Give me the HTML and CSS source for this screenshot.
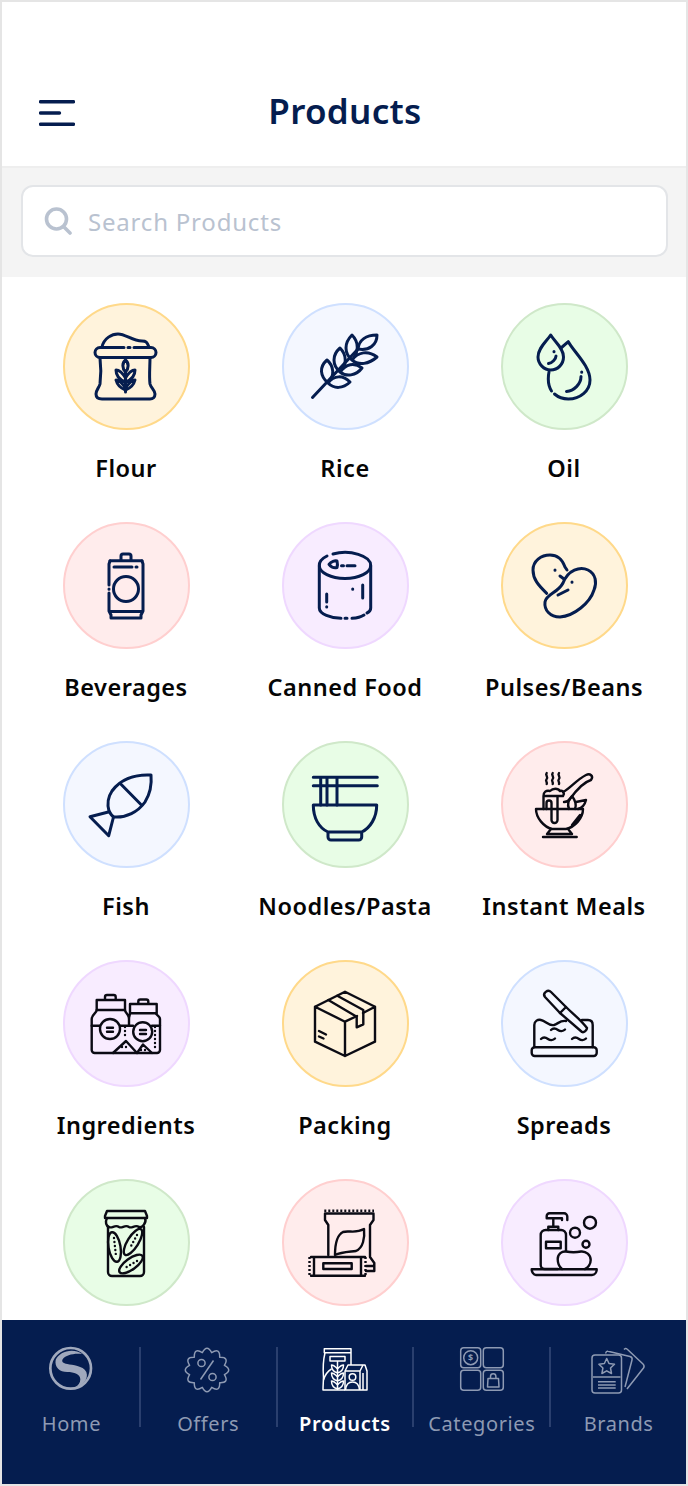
FILE: index.html
```html
<!DOCTYPE html>
<html lang="en">
<head>
  <meta charset="UTF-8">
  <meta name="viewport" content="width=device-width, initial-scale=1.0">
  <title>Products</title>
  <link rel="stylesheet" href="styles.css">
</head>
<body>

<div class="phone">

  <header class="topbar">
    <svg class="menu-icon" width="36" height="26" viewBox="0 0 36 26">
      <path d="M1.5 1.7H34.5M1.5 13H20.5M1.5 24.3H34.5"/>
    </svg>
    <h1>Products</h1>
  </header>

  <div class="search-band">
    <div class="search-box">
      <svg class="search-icon" width="28" height="28" viewBox="0 0 28 28">
        <circle cx="12.5" cy="12" r="10"/>
        <path d="M19.5 19.5L26 26"/>
      </svg>
      <span>Search Products</span>
    </div>
  </div>

  <main class="content">
    <div class="grid">

      <div class="item">
        <div class="circle yellow">
          <svg class="ico" viewBox="0 0 128 128">
            <path d="M62 43.5H38a5 5 0 0 0 0 10H89a5 5 0 0 0 0-10H72M66 43.5h2"/>
            <path d="M40 43C42 34 50 30 56 30C64 30 70 37 80 37C84 37 85 38 87 43"/>
            <path d="M38 54C39 62 39 72 38 80C37 84 34 86 34 90C34 93 36 95 40 95H88C91 95 93 93 93 90C93 86 89 84 88 80C87 72 88 62 88 54"/>
            <path d="M63.5 56C60 59 60 64 63.5 68C67 64 67 59 63.5 56ZM63.5 88V68M63.5 74C60 68 56 66 54 66C54 72 58 76 63.5 78C69 76 73 72 73 66C71 66 67 68 63.5 74ZM63.5 84C60 79 56 76 54 76C55 80 58 84 63.5 86C69 84 72 80 73 76C71 76 67 79 63.5 84Z"/>
          </svg>
        </div>
        <div class="label">Flour</div>
      </div>

      <div class="item">
        <div class="circle blue">
          <svg class="ico" viewBox="0 0 128 128">
            <path d="M31.5 93.5L77 45"/>
            <path d="M47 79C39 72 38 63 46 56C53 62 54 72 47 79ZM47 79C53 71 62 71 69 78C62 85 53 85 47 79Z"/>
            <path d="M59 68C51 61 51 51 59 44C66 51 66 61 59 68ZM59 68C65 60 73 58 81 64C75 72 65 73 59 68Z"/>
            <path d="M71 56C63 49 63 39 71 31C78 38 78 48 71 56ZM71 56C77 48 87 46 96 53C88 60 78 62 71 56Z"/>
            <path d="M77 45C78 36 85 31 96 31C96 41 88 47 77 45Z"/>
          </svg>
        </div>
        <div class="label">Rice</div>
      </div>

      <div class="item">
        <div class="circle green">
          <svg class="ico" viewBox="0 0 128 128">
            <path d="M50.7 31C46 38 38 44 38 53C38 60 44 66 50.7 66C58 66 63.5 60 63.5 53C63.5 44 55 38 50.7 31Z"/>
            <path d="M56 52C56 55 52 59 48.5 59.5M54 47.5v.2"/>
            <path d="M61 44L68.3 37.7C74 48 90 62 90 76C90 87 80 95 68.3 95C63 95 58 93 54.5 90M51.5 87C49 83 48.3 79 48.3 75C48.3 72 48.5 70 49 68"/>
            <path d="M81 72.5C81 80 74 87 66.5 87.5M81.7 68v.2"/>
          </svg>
        </div>
        <div class="label">Oil</div>
      </div>

      <div class="item">
        <div class="circle pink">
          <svg class="ico" viewBox="0 0 128 128">
            <path d="M59 37V33a2 2 0 0 1 2-2h6a2 2 0 0 1 2 2V37M48 37.7H80"/>
            <path d="M47 62V41L48 38M47 66v.2M47 70V88L49 92V95H79V92L81 88V41L80 38M48.5 88.5H79.5M52 44H70M74 44h1"/>
            <circle cx="64" cy="66" r="12.5"/>
          </svg>
        </div>
        <div class="label">Beverages</div>
      </div>

      <div class="item">
        <div class="circle purple">
          <svg class="ico" viewBox="0 0 128 128">
            <path d="M52 31A25.7 13 0 0 1 89.7 42.5A25.7 13 0 0 1 38.3 42.5A25.7 13 0 0 1 46 33"/>
            <path d="M38.3 43V85C38.3 91 50 95.3 60 95.3M64 95.3h2M71 95.3C76 95 80 94 83 92M86 90C88.5 89 89.7 87 89.7 85V43"/>
            <path d="M45.7 71V79M45.7 83.7v.2M81.7 62V75M71.7 66v.2"/>
            <path d="M48 41.3C50 38.5 54 37.5 56 38C56.5 40 56.5 43 56 44.5C53 45 50 44 48 41.3ZM60.5 42.7h2M66 42.7H74"/>
          </svg>
        </div>
        <div class="label">Canned Food</div>
      </div>

      <div class="item">
        <div class="circle yellow">
          <svg class="ico" viewBox="0 0 128 128">
            <path d="M46.7 70.3C38 62 33 56 33 47C33 38 41 32 50 32C58 32 62 36 65 44L67 47"/>
            <path d="M63 60C68 47 80 43 88 47C96 51 97 60 94 67C90 80 74 93 60 94C50 94 44 87 45 79C46 71 58 70 63 60Z"/>
            <path d="M55 47v.2M60 53L64 56M72 59v.2M58 72L68 67"/>
          </svg>
        </div>
        <div class="label">Pulses/Beans</div>
      </div>

      <div class="item">
        <div class="circle blue">
          <svg class="ico" viewBox="0 0 128 128">
            <path d="M89 33C72 32 58 38 50 49C46 55 45 62 47 69C49 73 50 74 52 75C64 76 76 70 83 60C88 52 90 44 89 33Z"/>
            <path d="M59 42.3L78.7 62.3"/>
            <path d="M47.3 69.7L28 74.7L46.7 93.7L51.5 75"/>
          </svg>
        </div>
        <div class="label">Fish</div>
      </div>

      <div class="item">
        <div class="circle green">
          <svg class="ico" viewBox="0 0 128 128">
            <path d="M32.3 35.3H96.3M32.3 43.7H96.3M39.7 35.3V63M46 35.3V63M56 35.3V63"/>
            <path d="M32.3 63H95.7C95.7 76 89 86 80.7 90V95a3 3 0 0 1-3 3H50a3 3 0 0 1-3-3V90C38 86 32.3 76 32.3 63ZM47 90H80.7"/>
          </svg>
        </div>
        <div class="label">Noodles/Pasta</div>
      </div>

      <div class="item">
        <div class="circle pink">
          <svg class="ico dark" viewBox="0 0 128 128">
            <path d="M46.7 31c-2 2 2 4 0 6s1 3 0 5M52.7 31c-2 2 2 4 0 6s1 3 0 5M59 31c-2 2 2 4 0 6s1 3 0 5"/>
            <path d="M43.5 67V54C43.5 50 46 48 50 49C53 46 58 46 60 49C63 48 65 51 63 54H44M46.5 67V61a2.5 2.5 0 0 1 5 0V78a3 3 0 0 0 6 0V54"/>
            <path d="M63 50C70 47 76 38 86 33C90 31 94 34 91 38C84 40 75 50 70 57C68 60 66 60 64 60"/>
            <path d="M69 67C67 62 69 57 72 54C75 58 77 62 75 67M76 60L86 58C85 62 82 66 78 67"/>
            <path d="M36 67H83C83 76 75 85 66 87H52C44 85 36 76 36 67ZM80 73L72 83"/>
            <path d="M51 87L47 92H72L68 87M43 95H76.7"/>
          </svg>
        </div>
        <div class="label">Instant Meals</div>
      </div>

      <div class="item">
        <div class="circle purple">
          <svg class="ico dark" viewBox="0 0 128 128">
            <path d="M34.7 39H63V49H34.7ZM43 39V36a2 2 0 0 1 2-2h6.7a2 2 0 0 1 2 2V39"/>
            <path d="M68 43H94.7V52.3H68ZM76.3 43V40.5a2 2 0 0 1 2-2h6a2 2 0 0 1 2 2V43"/>
            <path d="M34.7 49C34.7 52 30 53 29.7 58V89a3 3 0 0 0 3 3H95a3 3 0 0 0 3-3V58C98 55 94 54 94 52.3M63 49C63 52 67 53 67 58V64.7M68 52.3C68 54 67 55 67 58"/>
            <path d="M29.7 64.7H38M58 64.7H71M90 64.7H98"/>
            <circle cx="48" cy="68" r="10"/>
            <circle cx="80.7" cy="70.7" r="9.5"/>
            <path d="M45 66.7h6M45 70.7h6M78 69h6M78 73h6"/>
            <path d="M51 92L64 80L75 92M75 92L81 83.5L90 92"/>
            <path class="dots" d="M63 66V76M93 66V88M60 86H68M79 89H85"/>
          </svg>
        </div>
        <div class="label">Ingredients</div>
      </div>

      <div class="item">
        <div class="circle yellow">
          <svg class="ico dark" viewBox="0 0 128 128">
            <path d="M64 30.7L94 45.7V80.7L64 95L34 80.7V45.7ZM34 45.7L64 60.7V95M64 60.7L76 55M82 52L94 45.7"/>
            <path d="M47.3 39L75.7 55.7V66.3L82.3 63.3V49L56.3 34.7"/>
            <path d="M38 70L45 73.5M38 75.5L42.5 77.5"/>
          </svg>
        </div>
        <div class="label">Packing</div>
      </div>

      <div class="item">
        <div class="circle blue">
          <svg class="ico dark" viewBox="0 0 128 128">
            <rect x="31.7" y="86.3" width="65" height="8.7" rx="3"/>
            <path d="M34.3 86V64C34.3 60 38 58 41 59C46 60 48 65 54 64C58 63 60 59 66 60M82 59H88C91 59 92.7 61 92.7 64V86"/>
            <path d="M45 36L60 52L66 46L51 31C48 28 42 32 45 36Z"/>
            <path d="M60 52L82 71C84 72 87 69 87 67C80 58 72 52 66 46"/>
            <path d="M51 69c2.500-2.500 5-1.500 7 0s5 1.500 7-.5M41 78c2.500-2.500 5-1.500 7 0s5 1.500 7-.5M72 78c2.500-2.500 5-1.500 7 0s5 1.500 7-.5"/>
          </svg>
        </div>
        <div class="label">Spreads</div>
      </div>

      <div class="item">
        <div class="circle green">
          <svg class="ico dark" viewBox="0 0 128 128">
            <path d="M45 31H83L85 36V38H43V36Z"/>
            <path d="M45 38C43 42 44 46 47 47C50 49 53 44 57 47C60 49 63 44 67 47C70 49 73 44 77 47C80 48 85 43 83 38"/>
            <path d="M46 47V92a4 4 0 0 0 4 4H78a4 4 0 0 0 4-4V47"/>
            <ellipse cx="52.500" cy="67" rx="6" ry="15" transform="rotate(-10 52.500 67)"/>
            <ellipse cx="71" cy="62" rx="5.500" ry="15" transform="rotate(32 71 62)"/>
            <ellipse cx="69" cy="84" rx="5.500" ry="14" transform="rotate(54 69 84)"/>
            <path class="dots" d="M52 58L54 76M75 55L68 68M75 81L63 88"/>
          </svg>
        </div>
        <div class="label"></div>
      </div>

      <div class="item">
        <div class="circle pink">
          <svg class="ico dark" viewBox="0 0 128 128">
            <path class="teeth" d="M43.300 30.700H93"/>
            <path d="M44 33.500H92.500M44 33.500V40L47.300 45V75M92.500 33.500V40L89 45V77L93.300 83V91H85M85 86H92"/>
            <path d="M54 75C54 65 56 55 62 52C68 50 74 54 83 49C84 58 82 68 75 71C66 72 60 72 54 75Z"/>
            <path d="M30 77H84M30 95.700H84M33 77V95.700M80 77V95.700"/>
            <path class="teeth" d="M28.500 77V96M84.500 77V96"/>
            <rect x="42.300" y="83.300" width="28.400" height="5.700"/>
          </svg>
        </div>
        <div class="label"></div>
      </div>

      <div class="item">
        <div class="circle purple">
          <svg class="ico dark" viewBox="0 0 128 128">
            <path d="M31.700 89.300H96.700C96.700 92 95 95 92 95H36C33.500 95 31.700 92 31.700 89.300Z"/>
            <path d="M57.700 89H44.700a4 4 0 0 1-4-4V55a5 5 0 0 1 5-5H61a5 5 0 0 1 5 5V71"/>
            <path d="M48.300 50V46.700H58.300V50M53.300 46.700V38.300M46.700 38.300V36a2.700 2.700 0 0 1 2.700-2.700H64a3.300 3.300 0 0 1 3.300 3.300V40M46.700 38.300H62V40"/>
            <rect x="46" y="61.700" width="14.700" height="6.600"/>
            <path d="M62 89C58 86 57.700 82 57.700 79C57.700 74 62 71 66 71.500C71 72.500 76 72.500 81 71.500C86 71 90.700 75 90.700 80C90.700 84 88 88 85 89"/>
            <circle cx="75" cy="52.700" r="5"/>
            <circle cx="90" cy="42.700" r="6"/>
            <circle cx="86" cy="64.300" r="3.500"/>
          </svg>
        </div>
        <div class="label"></div>
      </div>

    </div>
  </main>

  <nav class="bottom-nav">

    <div class="nav-item">
      <svg class="nav-icon logo" width="60" height="46" viewBox="6 21 180 138">
        <circle cx="95" cy="85" r="61"/>
        <path d="M130 42C100 22 60 36 50 60C46 82 62 96 85 96C105 96 124 102 124 118C124 128 118 138 106 143C130 138 150 118 142 96C132 76 100 76 85 72C72 70 66 64 72 56C80 46 105 38 130 42Z"/>
      </svg>
      <span>Home</span>
    </div>

    <div class="nav-item">
      <svg class="nav-icon" width="60" height="46" viewBox="1 0 60 46">
        <path d="M47.400 18.300Q56 23 47.400 27.700Q52.500 36 42.700 35.700Q43 45.500 34.700 40.400Q30 49 25.300 40.400Q17 45.500 17.300 35.700Q7.500 36 12.600 27.700Q4 23 12.600 18.300Q7.500 10 17.300 10.300Q17 0.500 25.300 5.600Q30 -3 34.700 5.600Q43 0.500 42.700 10.300Q52.500 10 47.400 18.300Z"/>
        <path d="M36.500 13.500L23.500 32.500"/>
        <circle cx="24.500" cy="16" r="3.600"/>
        <circle cx="35.500" cy="30" r="3.600"/>
      </svg>
      <span>Offers</span>
    </div>

    <div class="nav-item active">
      <svg class="nav-icon" width="60" height="46" viewBox="0 0 60 46">
        <path d="M9.300 1.700H36V5.700H9.300ZM10 5.700C8 14 8 24 8.500 30C8.500 34 8 38 8 43H30M36 5.700V18"/>
        <path d="M15 9.500H30V14H15ZM22.500 14V43M22.500 22C19 18 17.500 18 16.500 18C16.500 22 19 25 22.500 26C26 25 28.500 22 28.500 18C27.500 18 26 18 22.500 22ZM22.500 30C19 26 17.500 26 16.500 26C16.500 30 19 33 22.500 34C26 33 28.500 30 28.500 26C27.500 26 26 26 22.500 30ZM22.500 38C19 34 17.500 34 16.500 34C16.500 38 19 41 22.500 42C26 41 28.500 38 28.500 34C27.500 34 26 34 22.500 38ZM8.500 33C10 28 13 24 16.500 22"/>
        <path d="M30 43V24L33 18H50L52 24V43ZM30 24H45L48 18M45 24V43M48 26V43"/>
        <circle cx="37.500" cy="30" r="3.300"/>
        <path d="M30.500 43C31 37 34 35 37.500 35C41 35 44 37 44.500 43"/>
      </svg>
      <span>Products</span>
    </div>

    <div class="nav-item">
      <svg class="nav-icon" width="60" height="46" viewBox="0 0 60 46">
        <rect x="8.700" y="0.700" width="20" height="20" rx="3"/>
        <rect x="31.300" y="0.700" width="20" height="20" rx="3"/>
        <rect x="8.700" y="23.300" width="20" height="20" rx="3"/>
        <rect x="31.300" y="23.300" width="20" height="20" rx="3"/>
        <circle cx="18.700" cy="10.700" r="7"/>
        <text x="18.700" y="14">$</text>
        <path d="M36 31.500H46.500L47 40H35.500ZM38.500 31.500V29.500a2.700 2.700 0 0 1 5.400 0V31.500"/>
      </svg>
      <span>Categories</span>
    </div>

    <div class="nav-item">
      <svg class="nav-icon" width="60" height="46" viewBox="0 0 60 46">
        <path d="M16.700 6.500C17 4.500 18 4 19 4.300L41 9.500C43 10 43.500 11 43 13L36 40"/>
        <path d="M35 2.500C36 1.300 37 1 38 2L54 17C55.500 18.500 55.500 19.500 54.500 21L38 42"/>
        <rect x="3" y="8" width="29.500" height="38" rx="3"/>
        <path d="M17.700 11.500L20 16.500L25.500 17.200L21.500 21L22.500 26.500L17.700 23.800L12.900 26.500L13.900 21L9.900 17.200L15.400 16.500Z"/>
        <path d="M4 30H31.500M9 34.700H26.700M9 38H26.700M9 41H26.700"/>
      </svg>
      <span>Brands</span>
    </div>

  </nav>

</div>

</body>
</html>
```

FILE: styles.css
```css
* { box-sizing: border-box; }
body { margin: 0; font-family: "Noto Sans", Arial, sans-serif; background: #fff; }

.phone { width: 688px; height: 1486px; border: 2px solid #e5e5e5; display: flex; flex-direction: column; overflow: hidden; background: #fff; }

.topbar { height: 164px; flex: none; position: relative; display: flex; align-items: center; justify-content: center; padding: 54px 0 0 2px; }
.topbar h1 { margin: 0; font-size: 35px; font-weight: 600; letter-spacing: .3px; color: #051d4f; line-height: 40px; }
.menu-icon { position: absolute; left: 37px; top: 98px; }
.menu-icon path { fill: none; stroke: #051d4f; stroke-width: 3.400; stroke-linecap: round; }

.search-band { height: 111px; flex: none; background: #f4f4f4; border-top: 2px solid #eeeeee; padding: 17px 18px 0 19px; }
.search-box { height: 72px; background: #fff; border: 2px solid #e3e5e8; border-radius: 12px; display: flex; align-items: center; padding-left: 21px; gap: 16px; }
.search-box span { font-size: 24px; letter-spacing: .8px; color: #b9c2d0; }
.search-icon { flex: none; }
.search-icon circle, .search-icon path { fill: none; stroke: #b9c2d0; stroke-width: 3.600; stroke-linecap: round; }

.content { flex: 1; overflow: hidden; padding: 26px 0 0 2px; }
.grid { display: grid; grid-template-columns: repeat(3, 219px); grid-auto-rows: 181px; row-gap: 38px; justify-content: center; }
.item { display: flex; flex-direction: column; align-items: center; }
.circle { width: 127px; height: 127px; border-radius: 50%; border: 2px solid; flex: none; }
.circle.yellow { background: #fff3dc; border-color: #ffd98a; }
.circle.blue { background: #f4f7ff; border-color: #cfe0ff; }
.circle.green { background: #e8fde6; border-color: #cfe8c9; }
.circle.pink { background: #ffecec; border-color: #ffcfcf; }
.circle.purple { background: #f8ecff; border-color: #efd8ff; }
.label { margin-top: 22px; font-size: 23.500px; font-weight: 600; letter-spacing: .5px; line-height: 32px; color: #050505; white-space: nowrap; }

.ico { display: block; width: 128px; height: 128px; margin: -1px -2.500px; }
.ico path, .ico circle, .ico rect, .ico ellipse { fill: none; stroke: #051d4f; stroke-width: 3; stroke-linecap: round; stroke-linejoin: round; }
.ico.dark path, .ico.dark circle, .ico.dark rect, .ico.dark ellipse { stroke: #0b0b14; stroke-width: 2.400; }
.ico.dark path.dots { stroke-dasharray: 0 4; }
.ico.dark path.teeth { stroke-dasharray: 2 2; stroke-linecap: butt; }

.bottom-nav { height: 164px; flex: none; background: #051d4f; display: grid; grid-template-columns: repeat(5, 136.800px); padding: 27px 0 0 1px; overflow: hidden; }
.nav-item { position: relative; display: flex; flex-direction: column; align-items: center; }
.nav-item + .nav-item::before { content: ""; position: absolute; left: -1px; top: 0; width: 2px; height: 80px; background: #2a3f6e; }
.nav-item span { margin-top: 16px; font-size: 20px; line-height: 30px; letter-spacing: .6px; color: #8e9ab3; white-space: nowrap; }
.nav-item.active span { color: #fff; font-weight: 600; letter-spacing: .7px; }

.nav-icon { display: block; overflow: visible; flex: none; }
.nav-icon path, .nav-icon circle, .nav-icon rect { fill: none; stroke: #8e9ab3; stroke-width: 1.500; stroke-linejoin: round; }
.nav-icon text { font-family: "Noto Sans", sans-serif; font-size: 9px; font-weight: 700; fill: #8e9ab3; text-anchor: middle; }
.nav-item.active .nav-icon path, .nav-item.active .nav-icon circle { stroke: #fff; }
.logo circle { stroke: #a0a9bd; stroke-width: 8; }
.logo path { fill: #a0a9bd; stroke: none; }
```
